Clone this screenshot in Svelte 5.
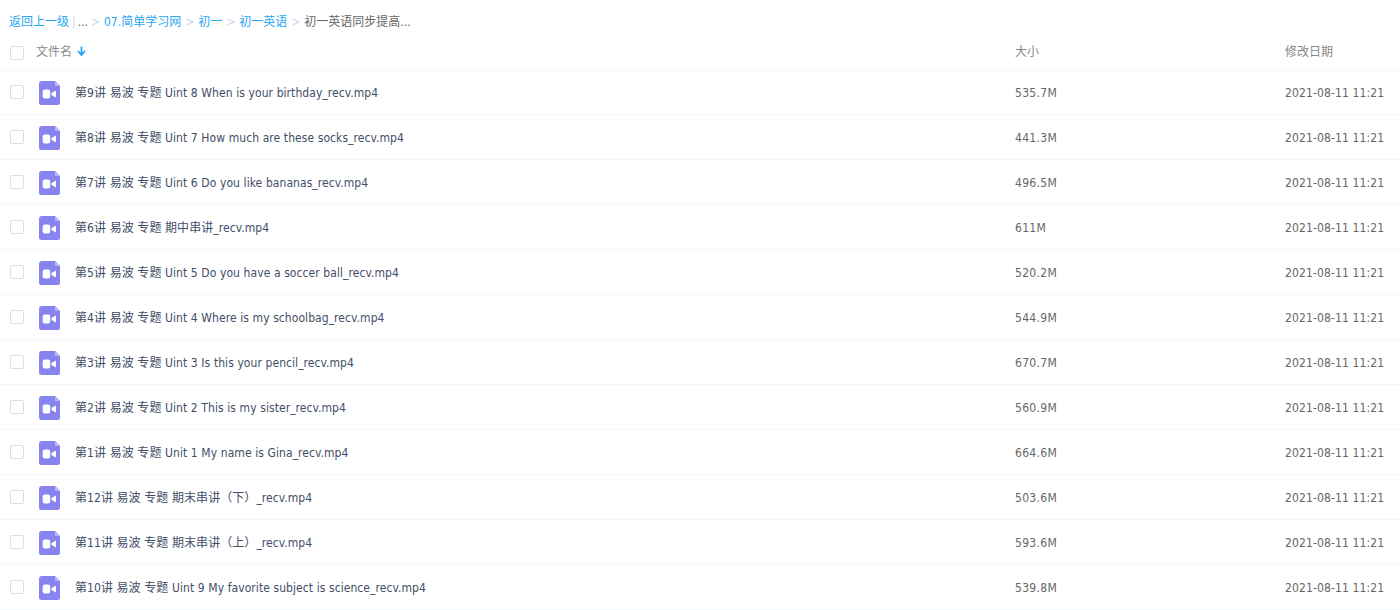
<script>
  const files = [
    { name: "第9讲 易波 专题 Uint 8 When is your birthday_recv.mp4", size: "535.7M" },
    { name: "第8讲 易波 专题 Uint 7 How much are these socks_recv.mp4", size: "441.3M" },
    { name: "第7讲 易波 专题 Uint 6 Do you like bananas_recv.mp4", size: "496.5M" },
    { name: "第6讲 易波 专题 期中串讲_recv.mp4", size: "611M" },
    { name: "第5讲 易波 专题 Uint 5 Do you have a soccer ball_recv.mp4", size: "520.2M" },
    { name: "第4讲 易波 专题 Uint 4 Where is my schoolbag_recv.mp4", size: "544.9M" },
    { name: "第3讲 易波 专题 Uint 3 Is this your pencil_recv.mp4", size: "670.7M" },
    { name: "第2讲 易波 专题 Uint 2 This is my sister_recv.mp4", size: "560.9M" },
    { name: "第1讲 易波 专题 Unit 1 My name is Gina_recv.mp4", size: "664.6M" },
    { name: "第12讲 易波 专题 期末串讲（下）_recv.mp4", size: "503.6M" },
    { name: "第11讲 易波 专题 期末串讲（上）_recv.mp4", size: "593.6M" },
    { name: "第10讲 易波 专题 Uint 9 My favorite subject is science_recv.mp4", size: "539.8M" }
  ];
  const crumbs = ["07.简单学习网", "初一", "初一英语"];
</script>

<div class="page">
  <div class="crumbs">
    <span class="link">返回上一级</span>
    <span class="bar">|</span>
    <span class="dots">...</span>
    {#each crumbs as c}
      <span class="sep">&gt;</span>
      <span class="link">{c}</span>
    {/each}
    <span class="sep">&gt;</span>
    <span class="current">初一英语同步提高...</span>
  </div>

  <div class="row head">
    <span class="check"></span>
    <span class="title">文件名
      <svg class="sort" width="9" height="10" viewBox="0 0 9 10">
        <path d="M4.5 0.5V8M1 5l3.5 4L8 5" fill="none" stroke="#2aa5f5" stroke-width="1.8" />
      </svg>
    </span>
    <span class="size">大小</span>
    <span class="date">修改日期</span>
  </div>

  {#each files as f}
    <div class="row item">
      <span class="check"></span>
      <svg class="icon" width="21" height="24" viewBox="0 0 21 24">
        <path d="M3 0H16L21 5V21.500A2.500 2.500 0 0 1 18.500 24H2.500A2.500 2.500 0 0 1 0 21.500V3A3 3 0 0 1 3 0Z" fill="#8784f0" />
        <path d="M16 0L21 5H16Z" fill="#b6b4f6" />
        <rect x="3.700" y="8.500" width="7.500" height="9" rx="2" fill="#fff" />
        <path d="M12.500 12L17 9.500V16.500L12.500 14Z" fill="#fff" />
      </svg>
      <span class="name">{f.name}</span>
      <span class="size">{f.size}</span>
      <span class="date">2021-08-11 11:21</span>
    </div>
  {/each}
</div>

<style>
  :global(body) {
    background: #fff;
    overflow: hidden;
  }

  .page {
    font-family: "DejaVu Sans Condensed", "DejaVu Sans", "Noto Sans CJK SC", sans-serif;
    font-stretch: condensed;
    font-size: 12px;
    line-height: 20px;
    color: #424e67;
  }

  .crumbs {
    height: 18px;
    padding: 13px 0 0 9px;
    display: flex;
    align-items: center;
    gap: 3px;
  }

  .link {
    color: #2aa5f5;
  }

  .bar {
    color: #c4d8f4;
  }

  .dots {
    margin-left: -1px;
    margin-right: -1px;
  }

  .dots,
  .current {
    color: #666;
  }

  .sep {
    color: #c4d8f4;
    margin: 0 1px;
  }

  .row {
    display: flex;
    align-items: center;
    box-sizing: border-box;
    padding-left: 10px;
  }

  .head {
    height: 39px;
    color: #888;
    padding-top: 2px;
  }

  .item {
    height: 45px;
    border-bottom: 1px solid #f2f6fd;
  }

  .head + .item {
    box-shadow: inset 0 1px #f2f6fd;
  }

  .check {
    width: 14px;
    height: 14px;
    box-sizing: border-box;
    border: 1px solid #d9dee8;
    border-radius: 2px;
    margin-right: 12px;
    flex: none;
  }

  .head .check {
    margin-top: 3px;
  }

  .item .check {
    margin-right: 15px;
  }

  .title {
    width: 979px;
    flex: none;
  }

  .sort {
    margin-left: 2px;
  }

  .icon {
    flex: none;
    margin-right: 15px;
    margin-top: 2px;
  }

  .name {
    width: 940px;
    flex: none;
    letter-spacing: 0.06px;
    word-spacing: 0.1px;
    margin-top: 2px;
  }

  .size {
    width: 270px;
    flex: none;
  }

  .item .size,
  .item .date {
    margin-top: 2px;
  }

  .item .size {
    letter-spacing: 0.3px;
  }

  .item .date {
    letter-spacing: 0.12px;
  }

  .item .size,
  .date {
    color: #666;
  }

  .head .date {
    color: #888;
  }
</style>
